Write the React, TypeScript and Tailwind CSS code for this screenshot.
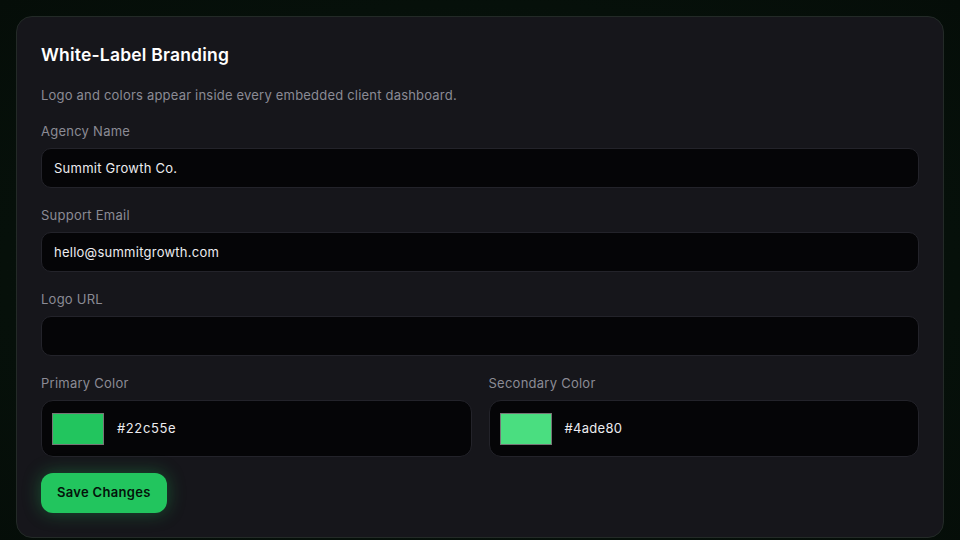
import React from 'react';

const fieldClass =
  'w-full h-10 rounded-[10px] border border-[#23232a] bg-[#050507] px-3 text-[13px] tracking-[0.25px] text-[#ececef] outline-none placeholder:text-[#55555e]';

function Field({ label, value, placeholder }: { label: string; value: string; placeholder?: string }) {
  return (
    <div className="flex flex-col">
      <label className="text-[13px] leading-5 tracking-[0.25px] text-[#8b8b95] mb-[7px]">{label}</label>
      <input className={fieldClass} defaultValue={value} placeholder={placeholder} />
    </div>
  );
}

function ColorField({ label, color, mono }: { label: string; color: string; mono?: boolean }) {
  return (
    <div className="flex flex-col flex-1 min-w-0">
      <label className="text-[13px] leading-5 tracking-[0.25px] text-[#8b8b95] mb-[7px]">{label}</label>
      <div className="h-[57px] rounded-[12px] border border-[#23232a] bg-[#050507] flex items-center px-[10px] gap-[13px]">
        <div className="w-[52px] h-8 border border-[#767676]" style={{ backgroundColor: color }} />
        <span className={mono ? 'text-[13px] text-[#ececef] tracking-[0.6px]' : 'text-[13px] text-[#ececef] tracking-[0.3px]'}>
          {color}
        </span>
      </div>
    </div>
  );
}

export default function App() {
  return (
    <div className="min-h-screen w-full bg-[radial-gradient(ellipse_at_center,#0a170f_0%,#06100a_70%,#050d08_100%)] p-4 font-['Inter',sans-serif]">
      <div className="rounded-2xl border border-[#232a27] bg-[#16161b] p-6 flex flex-col">
        <h2 className="text-[17.5px] leading-7 font-semibold tracking-[0.2px] text-white">White-Label Branding</h2>
        <p className="mt-4 text-[13px] leading-5 tracking-[0.2px] text-[#8b8b95]">
          Logo and colors appear inside every embedded client dashboard.
        </p>

        <div className="mt-4 flex flex-col gap-[17px]">
          <Field label="Agency Name" value="Summit Growth Co." />
          <Field label="Support Email" value="hello@summitgrowth.com" />
          <Field label="Logo URL" value="" />
          <div className="flex gap-[17px]">
            <ColorField label="Primary Color" color="#22c55e" mono />
            <ColorField label="Secondary Color" color="#4ade80" />
          </div>
        </div>

        <div className="mt-4">
          <button className="h-10 px-4 rounded-xl bg-[#22c55e] text-[13px] font-semibold tracking-[0.3px] text-[#04130a] shadow-[0_0_18px_rgba(34,197,94,0.35)]">
            Save Changes
          </button>
        </div>
      </div>
    </div>
  );
}
